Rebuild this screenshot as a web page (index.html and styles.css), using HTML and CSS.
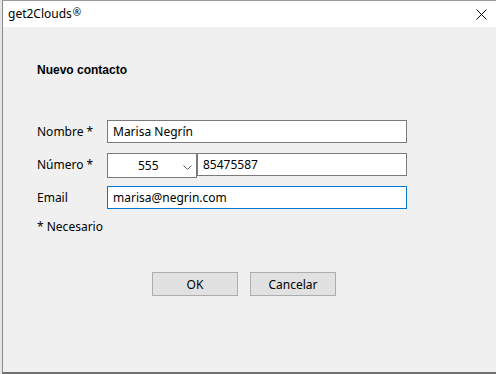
FILE: index.html
```html
<!DOCTYPE html>
<html lang="es">
<head>
  <meta charset="UTF-8" />
  <title>get2Clouds® – Nuevo contacto</title>
  <link rel="stylesheet" href="styles.css">
</head>
<body>
  <div class="window">
    <div class="titlebar">
      <span class="title">get2Clouds<span class="reg">®</span></span>
      <button class="close" aria-label="Cerrar">
        <svg width="11" height="11" viewBox="0 0 11 11">
          <path d="M0.5 0.5 L10.5 10.5 M10.5 0.5 L0.5 10.5" stroke="#000" stroke-width="1" fill="none"/>
        </svg>
      </button>
    </div>

    <main class="content">
      <h1>Nuevo contacto</h1>

      <form class="form">
        <label class="label" for="nombre">Nombre *</label>
        <input class="field" id="nombre" type="text" value="Marisa Negrín">

        <label class="label" for="numero">Número *</label>
        <div class="phone">
          <div class="select">
            <span>555</span>
            <svg width="9" height="5" viewBox="0 0 9 5">
              <path d="M0.5 0.5 L4.5 4.5 L8.5 0.5" stroke="#606060" stroke-width="1" fill="none"/>
            </svg>
          </div>
          <input class="field" id="numero" type="text" value="85475587">
        </div>

        <label class="label" for="email">Email</label>
        <input class="field focus" id="email" type="text" value="marisa@negrin.com">
      </form>

      <p class="note">* Necesario</p>

      <div class="actions">
        <button class="btn">OK</button>
        <button class="btn">Cancelar</button>
      </div>
    </main>
  </div>
</body>
</html>
```

FILE: styles.css
```css
:root {
  --face: #f0f0f0;
  --border: #7a7a7a;
  --focus: #0078d7;
  --btn-bg: #e1e1e1;
  --btn-border: #adadad;
}
* {
  box-sizing: border-box;
  margin: 0;
  padding: 0;
}
body {
  background: #e6e6e6;
  font-family: 'Noto Sans', 'Open Sans', sans-serif;
  font-size: 12px;
  color: #000;
  width: 496px;
  height: 374px;
  overflow: hidden;
}
.window {
  margin-left: 2px;
  width: 494px;
  height: 374px;
  background: var(--face);
  border-top: 1px solid #9a9a9a;
  border-left: 1px solid #8a8a8a;
  border-bottom: 2px solid #707070;
  display: flex;
  flex-direction: column;
}
.titlebar {
  height: 26px;
  background: #fff;
  display: flex;
  align-items: center;
  justify-content: space-between;
  padding-left: 5px;
}
.title {
  font-size: 12px;
  line-height: 16px;
}
.reg {
  font-size: 10px;
  position: relative;
  top: -2px;
  margin-left: 1px;
}
.close {
  width: 46px;
  height: 26px;
  border: none;
  background: transparent;
  display: flex;
  align-items: center;
  justify-content: center;
  padding-left: 17px;
}
.content {
  padding: 36px 0 0 34px;
}
h1 {
  font-family: 'Liberation Sans', Arial, sans-serif;
  font-size: 12px;
  font-weight: bold;
  line-height: 14px;
}
.form {
  margin-top: 43px;
  display: grid;
  grid-template-columns: 70px 300px;
  row-gap: 10px;
  align-items: center;
}
.label {
  line-height: 16px;
}
.field {
  height: 23px;
  border: 1px solid var(--border);
  background: #fff;
  padding: 0 5px;
  font: inherit;
  color: #000;
  outline: none;
  width: 100%;
}
.field.focus {
  border-color: var(--focus);
}
.phone {
  display: flex;
  align-items: flex-start;
  height: 25px;
  margin-bottom: -2px;
}
.phone .field {
  flex: 1;
}
.select {
  width: 90px;
  height: 25px;
  flex: none;
  border: 1px solid var(--border);
  background: #fff;
  display: flex;
  align-items: center;
  padding: 0 4px 0 30px;
  justify-content: space-between;
}
.select svg {
  margin-top: 3px;
}
.note {
  margin-top: 10px;
  line-height: 16px;
}
.actions {
  margin-top: 37px;
  margin-left: 115px;
  display: flex;
  gap: 12px;
}
.btn {
  width: 86px;
  height: 24px;
  background: var(--btn-bg);
  border: 1px solid var(--btn-border);
  font: inherit;
  color: #000;
}
```
